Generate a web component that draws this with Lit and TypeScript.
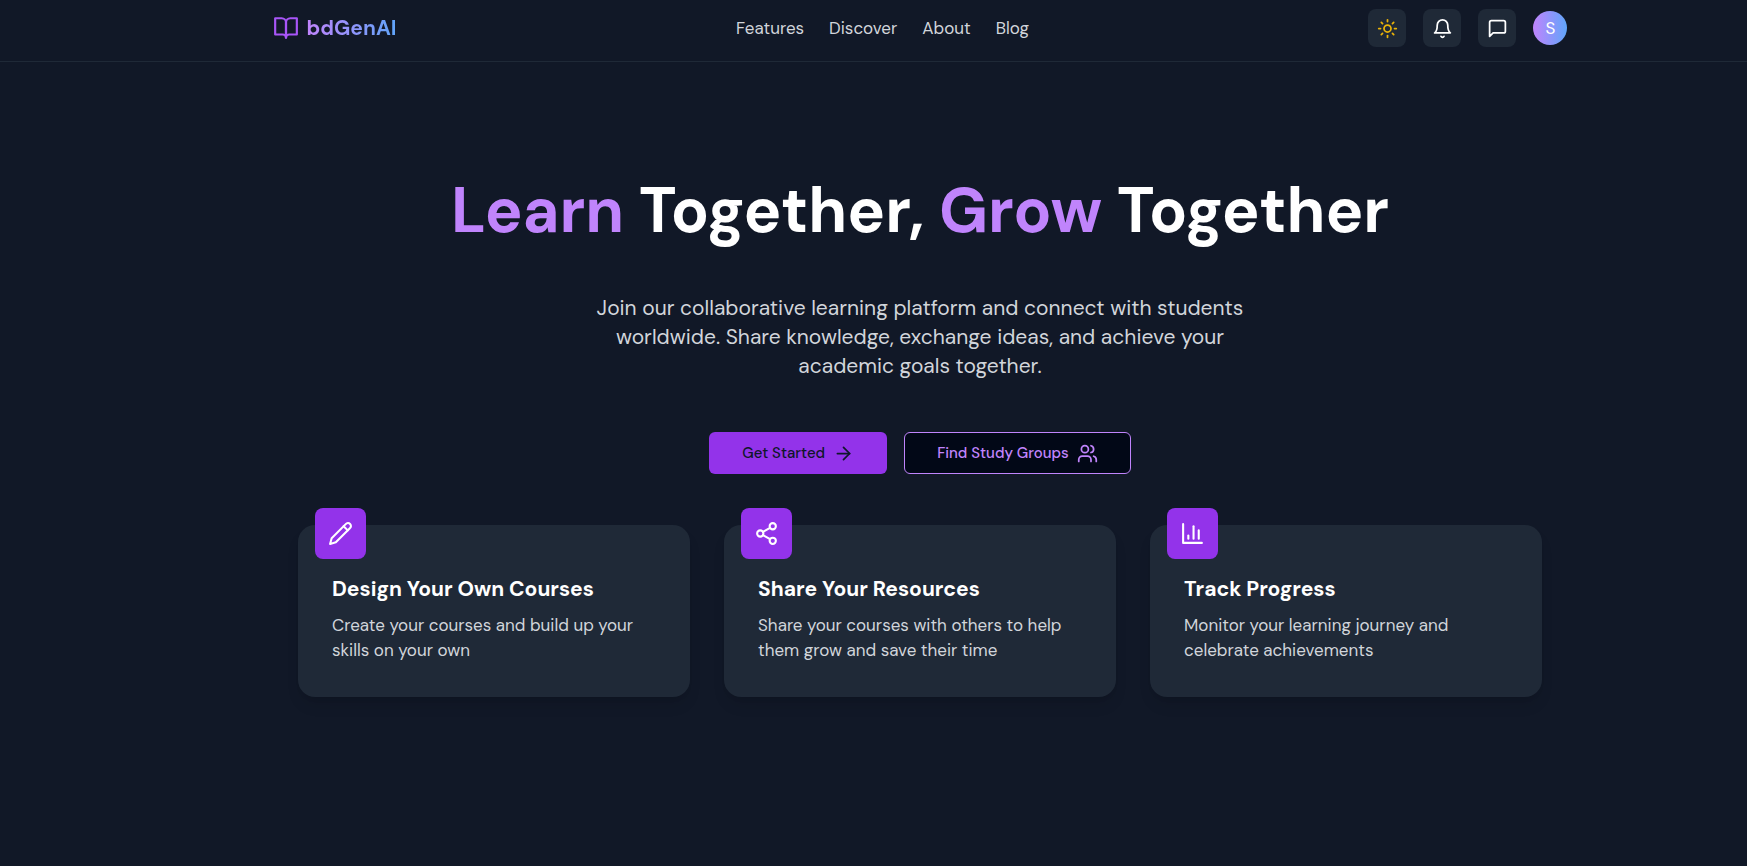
import { LitElement, html, css, svg, type SVGTemplateResult } from "lit";
import { customElement, property } from "lit/decorators.js";

const icons: Record<string, SVGTemplateResult> = {
  book: svg`<path d="M2 3h6a4 4 0 0 1 4 4v14a3 3 0 0 0-3-3H2z"/><path d="M22 3h-6a4 4 0 0 0-4 4v14a3 3 0 0 1 3-3h7z"/>`,
  sun: svg`<circle cx="12" cy="12" r="4"/><path d="M12 2v2"/><path d="M12 20v2"/><path d="m4.93 4.93 1.41 1.41"/><path d="m17.66 17.66 1.41 1.41"/><path d="M2 12h2"/><path d="M20 12h2"/><path d="m6.34 17.66-1.41 1.41"/><path d="m19.07 4.93-1.41 1.41"/>`,
  bell: svg`<path d="M6 8a6 6 0 0 1 12 0c0 7 3 9 3 9H3s3-2 3-9"/><path d="M10.3 21a1.94 1.94 0 0 0 3.4 0"/>`,
  message: svg`<path d="M21 15a2 2 0 0 1-2 2H7l-4 4V5a2 2 0 0 1 2-2h14a2 2 0 0 1 2 2z"/>`,
  arrow: svg`<path d="M5 12h14"/><path d="m12 5 7 7-7 7"/>`,
  users: svg`<path d="M16 21v-2a4 4 0 0 0-4-4H6a4 4 0 0 0-4 4v2"/><circle cx="9" cy="7" r="4"/><path d="M22 21v-2a4 4 0 0 0-3-3.87"/><path d="M16 3.13a4 4 0 0 1 0 7.75"/>`,
  pencil: svg`<path d="M17 3a2.85 2.83 0 1 1 4 4L7.5 20.5 2 22l1.5-5.5Z"/><path d="m15 5 4 4"/>`,
  share: svg`<circle cx="18" cy="5" r="3"/><circle cx="6" cy="12" r="3"/><circle cx="18" cy="19" r="3"/><path d="m8.59 13.51 6.83 3.98"/><path d="m15.41 6.51-6.82 3.98"/>`,
  chart: svg`<path d="M3 3v18h18"/><path d="M18 17V9"/><path d="M13 17V5"/><path d="M8 17v-3"/>`,
};

@customElement("ui-icon")
class UiIcon extends LitElement {
  @property() name = "";
  static styles = css`
    :host { display: block; flex: none; width: 21px; height: 21px; }
    svg {
      display: block; width: 100%; height: 100%; fill: none; stroke: currentColor;
      stroke-width: 2; stroke-linecap: round; stroke-linejoin: round;
    }
  `;
  render() {
    return html`<svg viewBox="0 0 24 24" aria-hidden="true">${icons[this.name]}</svg>`;
  }
}

@customElement("feature-card")
class FeatureCard extends LitElement {
  @property() icon = "";
  @property() heading = "";
  @property() text = "";
  static styles = css`
    :host { display: block; }
    .card {
      box-sizing: border-box; height: 100%; position: relative;
      padding: 50px 34px 34px; border-radius: 17px; background: #1f2937;
      box-shadow: 0 10px 15px -3px rgb(0 0 0 / 0.1), 0 4px 6px -4px rgb(0 0 0 / 0.1);
    }
    .badge {
      position: absolute; top: -17px; left: 17px; padding: 13px;
      border-radius: 8px; background: #9333ea; color: #fff;
    }
    .badge ui-icon { width: 25px; height: 25px; }
    h2 { margin: 0 0 9px; font-size: 21px; line-height: 29px; font-weight: 700; color: #fff; }
    p { margin: 0; font-size: 17px; line-height: 25px; color: #d1d5db; }
  `;
  render() {
    return html`<article class="card">
      <div class="badge"><ui-icon name=${this.icon}></ui-icon></div>
      <h2>${this.heading}</h2>
      <p>${this.text}</p>
    </article>`;
  }
}

const links = ["Features", "Discover", "About", "Blog"];
const features = [
  { icon: "pencil", heading: "Design Your Own Courses", text: "Create your courses and build up your skills on your own" },
  { icon: "share", heading: "Share Your Resources", text: "Share your courses with others to help them grow and save their time" },
  { icon: "chart", heading: "Track Progress", text: "Monitor your learning journey and celebrate achievements" },
];

@customElement("app-root")
class AppRoot extends LitElement {
  static styles = css`
    :host {
      display: block; box-sizing: border-box; min-height: 100vh;
      background: #111827; color: #d1d5db;
      font-family: "DM Sans", "Open Sans", sans-serif; font-size: 17px; line-height: 25px;
    }
    header { padding: 9px 0 14px 93px; border-bottom: 1px solid #1f2937; }
    .bar {
      max-width: 1295px; margin: 0 auto;
      display: flex; align-items: center; justify-content: space-between;
    }
    a { color: inherit; text-decoration: none; }
    .brand { display: flex; align-items: center; gap: 8px; color: #a855f7; }
    .brand ui-icon { width: 26px; height: 26px; }
    .name {
      font-size: 21px; line-height: 29px; font-weight: 700; color: transparent;
      background: linear-gradient(to right, #c084fc, #60a5fa);
      -webkit-background-clip: text; background-clip: text;
    }
    nav { display: flex; gap: 25px; }
    .tools { display: flex; align-items: center; gap: 17px; }
    button { font: inherit; border: 0; cursor: pointer; }
    .tool {
      display: grid; place-items: center; width: 38px; height: 38px; padding: 0;
      border-radius: 8px; background: #1f2937; color: #fff;
    }
    .sun { color: #eab308; }
    .avatar {
      width: 34px; height: 34px; padding: 0; border-radius: 50%; color: #fff;
      background: linear-gradient(to right, #c084fc, #60a5fa);
    }
    main { padding: 118px 0 51px 93px; }
    .hero { display: flex; flex-direction: column; align-items: center; gap: 51px; text-align: center; }
    h1 { margin: 0; font-size: 63px; line-height: 63px; font-weight: 700; color: #fff; }
    .accent { color: #c084fc; }
    .lead { margin: 0; max-width: 706px; font-size: 21px; line-height: 29px; }
    .actions { display: flex; gap: 17px; }
    .action {
      display: flex; align-items: center; gap: 8px; height: 42px; padding: 0 33px;
      border-radius: 6px; font-size: 15px; font-weight: 500;
    }
    .primary { background: #9333ea; color: #0f172a; }
    .outline { background: #020817; color: #c084fc; border: 1px solid #c084fc; padding: 0 32px; }
    .cards {
      max-width: 1244px; margin: 51px auto 0;
      display: grid; grid-template-columns: repeat(3, 1fr); gap: 34px;
    }
  `;
  render() {
    return html`
      <header>
        <div class="bar">
          <a class="brand" href="#"><ui-icon name="book"></ui-icon><span class="name">bdGenAI</span></a>
          <nav>${links.map((l) => html`<a href="#">${l}</a>`)}</nav>
          <div class="tools">
            <button class="tool sun" aria-label="Toggle theme"><ui-icon name="sun"></ui-icon></button>
            <button class="tool" aria-label="Notifications"><ui-icon name="bell"></ui-icon></button>
            <button class="tool" aria-label="Messages"><ui-icon name="message"></ui-icon></button>
            <button class="avatar">S</button>
          </div>
        </div>
      </header>
      <main>
        <section class="hero">
          <h1><span class="accent">Learn</span> Together, <span class="accent">Grow</span> Together</h1>
          <p class="lead">Join our collaborative learning platform and connect with students worldwide. Share knowledge, exchange ideas, and achieve your academic goals together.</p>
          <div class="actions">
            <button class="action primary">Get Started<ui-icon name="arrow"></ui-icon></button>
            <button class="action outline">Find Study Groups<ui-icon name="users"></ui-icon></button>
          </div>
        </section>
        <section class="cards">
          ${features.map((f) => html`<feature-card icon=${f.icon} heading=${f.heading} text=${f.text}></feature-card>`)}
        </section>
      </main>
    `;
  }
}
